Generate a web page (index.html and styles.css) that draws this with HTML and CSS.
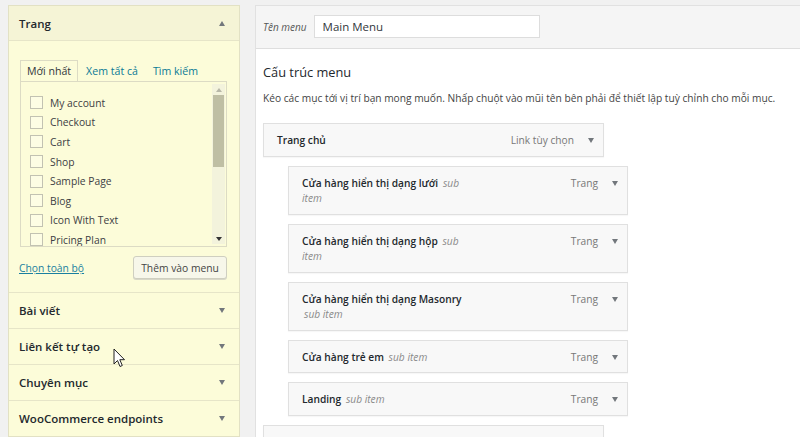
FILE: index.html
```html
<!DOCTYPE html>
<html lang="vi">
<head>
<meta charset="utf-8">
<title>Menus</title>
<link rel="stylesheet" href="styles.css">
</head>
<body>
<div class="page">
  <aside class="side">
    <section class="acc open">
      <h3 class="acc-title">Trang <span class="tri up"></span></h3>
      <div class="acc-body">
        <ul class="tabs">
          <li class="tab active">Mới nhất</li>
          <li class="tab">Xem tất cả</li>
          <li class="tab">Tìm kiếm</li>
        </ul>
        <div class="tab-panel">
          <ul class="checklist">
            <li><span class="cb"></span>My account</li>
            <li><span class="cb"></span>Checkout</li>
            <li><span class="cb"></span>Cart</li>
            <li><span class="cb"></span>Shop</li>
            <li><span class="cb"></span>Sample Page</li>
            <li><span class="cb"></span>Blog</li>
            <li><span class="cb"></span>Icon With Text</li>
            <li><span class="cb"></span>Pricing Plan</li>
          </ul>
          <div class="scrollbar">
            <span class="sb-btn"><span class="sb-arrow up"></span></span>
            <span class="sb-track"><span class="sb-thumb"></span></span>
            <span class="sb-btn"><span class="sb-arrow down"></span></span>
          </div>
        </div>
        <div class="actions">
          <a class="select-all" href="#">Chọn toàn bộ</a>
          <button class="btn">Thêm vào menu</button>
        </div>
      </div>
    </section>
    <section class="acc"><h3 class="acc-title">Bài viết <span class="tri"></span></h3></section>
    <section class="acc"><h3 class="acc-title">Liên kết tự tạo <span class="tri"></span></h3></section>
    <section class="acc"><h3 class="acc-title">Chuyên mục <span class="tri"></span></h3></section>
    <section class="acc"><h3 class="acc-title">WooCommerce endpoints <span class="tri"></span></h3></section>
    <svg class="cursor" width="13" height="20" viewBox="0 0 13 20"><path d="M1 1 L1 16 L4.5 12.5 L7 18.5 L9.3 17.5 L6.8 11.7 L11.5 11.7 Z" fill="#fff" stroke="#222" stroke-width="1" stroke-linejoin="round"/></svg>
  </aside>

  <main class="menu-edit">
    <div class="menu-header">
      <label class="name-label">Tên menu</label>
      <input class="name-input" type="text" value="Main Menu">
    </div>
    <div class="menu-body">
      <h3 class="struct-title">Cấu trúc menu</h3>
      <p class="struct-desc">Kéo các mục tới vị trí bạn mong muốn. Nhấp chuột vào mũi tên bên phải để thiết lập tuỳ chỉnh cho mỗi mục.</p>
      <ul class="menu-items">
        <li class="item">
          <span class="title"><b>Trang chủ</b></span>
          <span class="type">Link tùy chọn</span><span class="tri"></span>
        </li>
        <li class="item sub">
          <span class="title"><b>Cửa hàng hiển thị dạng lưới</b> <i>sub item</i></span>
          <span class="type">Trang</span><span class="tri"></span>
        </li>
        <li class="item sub">
          <span class="title"><b>Cửa hàng hiển thị dạng hộp</b> <i>sub item</i></span>
          <span class="type">Trang</span><span class="tri"></span>
        </li>
        <li class="item sub">
          <span class="title"><b>Cửa hàng hiển thị dạng Masonry</b> <i>sub item</i></span>
          <span class="type">Trang</span><span class="tri"></span>
        </li>
        <li class="item sub">
          <span class="title"><b>Cửa hàng trẻ em</b> <i>sub item</i></span>
          <span class="type">Trang</span><span class="tri"></span>
        </li>
        <li class="item sub">
          <span class="title"><b>Landing</b> <i>sub item</i></span>
          <span class="type">Trang</span><span class="tri"></span>
        </li>
        <li class="item item-next"></li>
      </ul>
    </div>
  </main>
</div>
</body>
</html>
```

FILE: styles.css
```css
* { box-sizing: border-box; }
html, body { margin: 0; padding: 0; }
body {
  background: #f1f1f1;
  font-family: "Open Sans", "Noto Sans", sans-serif;
  color: #32373c;
  overflow: hidden;
  height: 437px;
}
ul { list-style: none; margin: 0; padding: 0; }

.page {
  display: flex;
  align-items: flex-start;
  gap: 15px;
  padding: 5px 0 0 8px;
}

/* ---------- sidebar ---------- */
.side {
  position: relative;
  width: 232px;
  flex: none;
  background: #fcfcd9;
  border: 1px solid #e2e1c4;
}
.acc { border-top: 1px solid #e6e5c8; }
.acc:first-child { border-top: 0; }
.acc-title {
  margin: 0;
  height: 35px;
  padding: 0 14px 0 10px;
  display: flex;
  align-items: center;
  justify-content: space-between;
  font-size: 11.5px;
  font-weight: 600;
  color: #23282d;
}
.open .acc-title {
  background: #f5f4d6;
  border-bottom: 1px solid #e6e5c8;
}
.tri {
  width: 0; height: 0;
  border-left: 3.5px solid transparent;
  border-right: 3.5px solid transparent;
  border-top: 5px solid #72777c;
}
.tri.up { border-top: 0; border-bottom: 5px solid #72777c; }

.acc-body { padding: 19px 12px 13px 11px; }
.tabs { display: flex; font-size: 10.6px; }
.tab {
  height: 21px;
  line-height: 20px;
  padding: 0 6px;
  color: #0a7a96;
  border: 1px solid transparent;
  border-bottom: 0;
  margin-right: 1px;
}
.tab.active {
  color: #32373c;
  border-color: #dcdbc4;
  background: #fcfcd9;
  margin-bottom: -1px;
  position: relative;
}
.tab-panel {
  display: flex;
  height: 166px;
  border: 1px solid #dcdbc4;
  overflow: hidden;
}
.checklist {
  flex: 1;
  padding: 11px 0 0 9px;
  font-size: 10.3px;
  color: #3c4044;
}
.checklist li {
  height: 19.6px;
  display: flex;
  align-items: center;
  gap: 7px;
}
.cb {
  width: 13px; height: 13px;
  border: 1px solid #c2c2b2;
  background: #fdfde4;
  flex: none;
}
.scrollbar {
  width: 13px;
  margin: 2px 1px 2px 0;
  display: flex;
  flex-direction: column;
  background: #f3f3dc;
}
.sb-btn {
  height: 11px;
  display: flex;
  align-items: center;
  justify-content: center;
}
.sb-arrow {
  width: 0; height: 0;
  border-left: 3px solid transparent;
  border-right: 3px solid transparent;
}
.sb-arrow.up { border-bottom: 4px solid #b8b8a8; }
.sb-arrow.down { border-top: 4px solid #333; }
.sb-track { flex: 1; padding: 0 1px; }
.sb-thumb {
  display: block;
  height: 72px;
  background: #bfbfa4;
}
.actions {
  margin-top: 9px;
  display: flex;
  align-items: center;
  justify-content: space-between;
}
.select-all {
  font-size: 10.3px;
  color: #1a7fa0;
  text-decoration: underline;
  margin-left: -1px;
}
.btn {
  font: inherit;
  font-size: 10.3px;
  color: #444;
  height: 23px;
  width: 94px;
  padding: 0;
  background: #f7f7ea;
  border: 1px solid #cfcfc0;
  border-radius: 3px;
  box-shadow: 0 1px 0 #d8d8c8;
}
.cursor { position: absolute; left: 104px; top: 342px; }

/* ---------- menu editor ---------- */
.menu-edit {
  flex: 1;
  min-height: 440px;
  background: #fff;
  border: 1px solid #e1e1e1;
  border-right: 0;
}
.menu-header {
  height: 43px;
  background: #f5f5f5;
  border-bottom: 1px solid #dedede;
  display: flex;
  align-items: center;
  gap: 7px;
  padding: 0 0 1px 7px;
}
.name-label { font-size: 10px; font-style: italic; color: #555; }
.name-input {
  width: 226px;
  height: 23px;
  border: 1px solid #ddd;
  padding: 0 8px;
  font: inherit;
  font-size: 11.5px;
  color: #32373c;
  background: #fff;
}
.menu-body { padding: 13px 0 0 7px; }
.struct-title {
  margin: 0;
  font-size: 12.8px;
  font-weight: 400;
  line-height: 20px;
  color: #23282d;
}
.struct-desc {
  margin: 8px 0 17px;
  font-size: 10.2px;
  line-height: 16px;
  color: #444;
}
.menu-items { display: flex; flex-direction: column; gap: 9px; }
.item {
  width: 341px;
  display: flex;
  align-items: flex-start;
  padding: 9px 9px 7px 13px;
  background: #f8f8f8;
  border: 1px solid #e0e0e0;
  box-shadow: 0 1px 1px rgba(0,0,0,.03);
  font-size: 10.2px;
  line-height: 15.5px;
}
.item.sub { margin-left: 25px; width: 340px; }
.item-next { height: 34px; }
.item .title { width: 170px; color: #23282d; }
.item .title b { font-weight: 600; }
.item .title i { color: #8a8a8a; margin-left: 2px; }
.item .type { margin-left: auto; color: #777; }
.item .tri { margin: 5px 0 0 14px; flex: none; }
```
